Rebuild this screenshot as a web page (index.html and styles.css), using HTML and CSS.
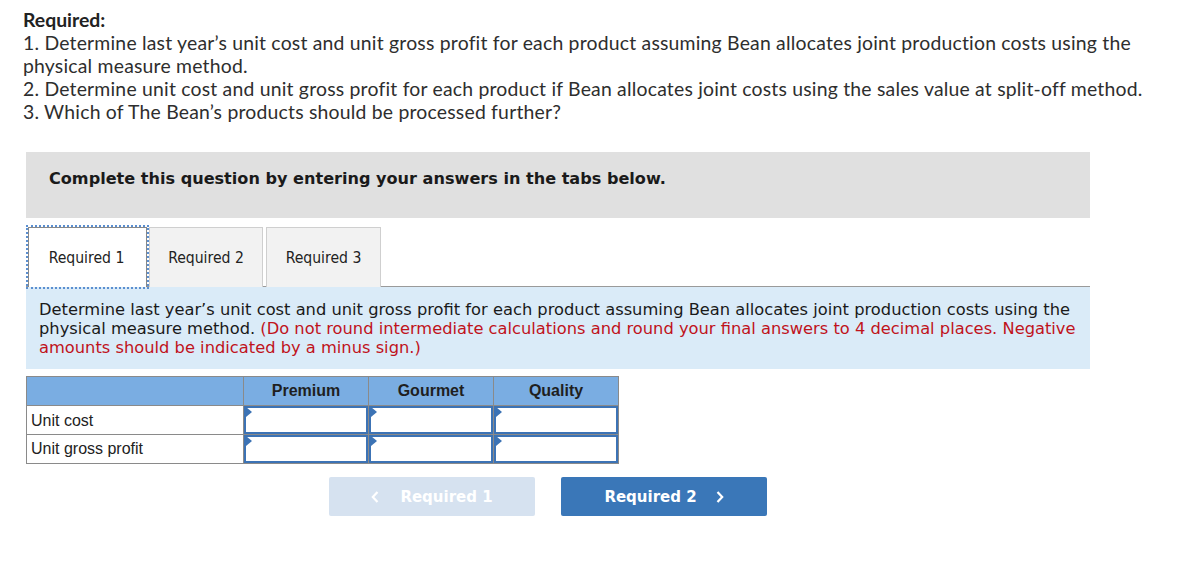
FILE: index.html
```html
<!DOCTYPE html>
<html>
<head>
<meta charset="utf-8">
<link rel="stylesheet" href="styles.css">
</head>
<body>
<div class="req">
  <div class="req-title">Required:</div>
  <div>1. Determine last year’s unit cost and unit gross profit for each product assuming Bean allocates joint production costs using the physical measure method.</div>
  <div>2. Determine unit cost and unit gross profit for each product if Bean allocates joint costs using the sales value at split-off method.</div>
  <div>3. Which of The Bean’s products should be processed further?</div>
</div>

<div class="panel">
  <div class="banner">Complete this question by entering your answers in the tabs below.</div>

  <div class="tabs">
    <div class="tab active t1">Required 1</div>
    <div class="tab t2">Required 2</div>
    <div class="tab t3">Required 3</div>
  </div>

  <div class="instr">
    Determine last year’s unit cost and unit gross profit for each product assuming Bean allocates joint production costs using the physical measure method. <span class="red">(Do not round intermediate calculations and round your final answers to 4 decimal places. Negative amounts should be indicated by a minus sign.)</span>
  </div>

  <div class="grid">
    <div class="hd"></div>
    <div class="hd">Premium</div>
    <div class="hd">Gourmet</div>
    <div class="hd last">Quality</div>

    <div class="lbl">Unit cost</div>
    <div class="inp"><span class="tri"></span></div>
    <div class="inp"><span class="tri"></span></div>
    <div class="inp last"><span class="tri"></span></div>

    <div class="lbl">Unit gross profit</div>
    <div class="inp"><span class="tri"></span></div>
    <div class="inp"><span class="tri"></span></div>
    <div class="inp last"><span class="tri"></span></div>
  </div>

  <div class="nav">
    <div class="btn prev">
      <svg class="chev" width="8" height="12" viewBox="0 0 8 12"><path d="M6.5 1 L1.8 6 L6.5 11" fill="none" stroke="#ffffff" stroke-width="2.2"/></svg>
      <span>Required 1</span>
    </div>
    <div class="btn next">
      <span>Required 2</span>
      <svg class="chev" width="8" height="12" viewBox="0 0 8 12"><path d="M1.5 1 L6.2 6 L1.5 11" fill="none" stroke="#ffffff" stroke-width="2.2"/></svg>
    </div>
  </div>
</div>
</body>
</html>
```

FILE: styles.css
```css
html, body {
  margin: 0;
  padding: 0;
  background: #ffffff;
}

.req {
  padding: 8px 0 0 23px;
  font-family: Lato, "Open Sans", sans-serif;
  font-size: 19.4px;
  letter-spacing: 0.2px;
  line-height: 23px;
  color: #2e2e2e;
  width: 1140px;
}

.req-title {
  font-weight: 700;
  letter-spacing: 0;
  color: #222;
}

.panel {
  margin: 29px 0 0 26px;
  width: 1064px;
}

.banner {
  background: #e0e0e0;
  height: 66px;
  box-sizing: border-box;
  padding: 18px 23px 0;
  font-family: "DejaVu Sans", Verdana, sans-serif;
  font-weight: 700;
  font-size: 16.1px;
  line-height: 18px;
  color: #1a1a1a;
}

.tabs {
  display: flex;
  margin-top: 9px;
  padding-left: 2px;
  border-bottom: 1px solid #9a9a9a;
  height: 59px;
}

.tab {
  box-sizing: border-box;
  height: 60px;
  display: flex;
  align-items: center;
  justify-content: center;
  background: #f2f2f2;
  border: 1px solid #cfcfcf;
  border-bottom: none;
  font-family: "DejaVu Sans Condensed", "DejaVu Sans", sans-serif;
  font-size: 15.6px;
  color: #222;
}

.t1 { width: 119px; padding-right: 2px; }
.t2 { width: 114px; margin-left: 2px; }
.t3 { width: 115px; margin-left: 3px; }

.tab.active {
  background: #ffffff;
  outline: 2px dotted #5b8fd0;
  outline-offset: 0;
  border-color: #888;
}

.instr {
  background: #daebf8;
  padding: 13px 7px 12px 13px;
  font-family: "DejaVu Sans", Verdana, sans-serif;
  font-size: 16.3px;
  line-height: 19px;
  color: #1a1a1a;
}

.red {
  color: #c0131c;
}

.grid {
  margin-top: 7px;
  display: grid;
  grid-template-columns: 217px 125px 125px 125px;
  width: max-content;
  border: 1px solid #8a8a8a;
  border-right: none;
  font-family: "Liberation Sans", Arial, sans-serif;
  font-size: 16px;
  color: #222;
}

.hd {
  box-sizing: border-box;
  height: 29px;
  background: #7aade2;
  border-right: 1px solid #8a8a8a;
  border-bottom: 1px solid #8a8a8a;
  font-weight: 700;
  text-align: center;
  line-height: 28px;
  color: #1f1f1f;
}

.lbl {
  box-sizing: border-box;
  height: 29px;
  padding: 0 4px;
  border-right: 1px solid #8a8a8a;
  border-bottom: 1px solid #8a8a8a;
  line-height: 29px;
}

.grid > div:nth-last-child(-n+4) {
  border-bottom: none;
  height: 28px;
  line-height: 28px;
}

.inp {
  box-sizing: border-box;
  height: 29px;
  position: relative;
  border-right: 1px solid #8a8a8a;
  border-bottom: 1px solid #8a8a8a;
}

.inp::before {
  content: "";
  position: absolute;
  inset: 0;
  border: 2px solid #3c73b5;
}

.tri {
  position: absolute;
  left: 2px;
  top: 1px;
  width: 0;
  height: 0;
  border-top: 5px solid transparent;
  border-bottom: 5px solid transparent;
  border-left: 6px solid #3c73b5;
  z-index: 1;
}

.nav {
  display: flex;
  gap: 26px;
  margin: 13px 0 0 303px;
}

.btn {
  box-sizing: border-box;
  width: 206px;
  height: 39px;
  border-radius: 2px;
  display: flex;
  align-items: center;
  justify-content: center;
  font-family: "DejaVu Sans", Verdana, sans-serif;
  font-weight: 700;
  font-size: 15px;
  color: #ffffff;
}

.btn.prev {
  background: #d6e2f0;
}

.btn.next {
  background: #3a77b8;
}

.prev .chev {
  margin-right: 21px;
}

.next .chev {
  margin-left: 19px;
}
```
